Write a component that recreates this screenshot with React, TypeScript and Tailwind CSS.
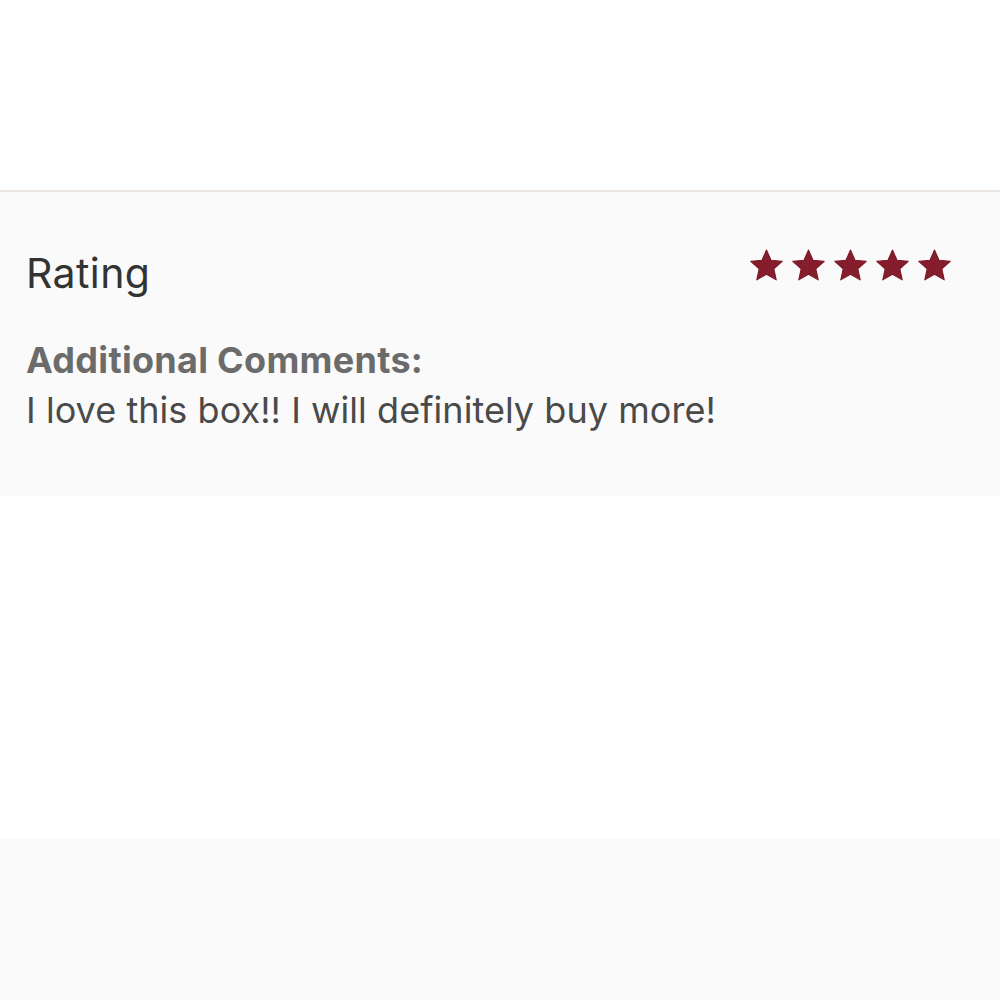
import React from "react";

const Star = () => (
  <svg width="33" height="32" viewBox="0 0 24 23" className="block">
    <path
      d="M12 0.6L15.29 8.07L23.41 8.89L17.33 14.33L19.05 22.31L12 18.2L4.95 22.31L6.67 14.33L0.59 8.89L8.71 8.07Z"
      fill="#861d2d"
      stroke="#7a1a29"
      strokeWidth="0.8"
      strokeLinejoin="round"
    />
  </svg>
);

export default function App() {
  return (
    <div className="w-[1000px] h-[1000px] bg-white flex flex-col" style={{ fontFamily: '"Inter", "Open Sans", sans-serif' }}>
      <div className="h-[190px] bg-white" />
      <div className="h-[306px] bg-[#fafafa] border-t-2 border-[#ebe6e1] px-[26px] pt-[57px]">
        <div className="flex items-start justify-between">
          <div className="text-[41px] leading-[41px] text-[#333333] pt-[4px] tracking-[0.4px]">Rating</div>
          <div className="flex gap-[9px] pr-[23px]">
            <Star />
            <Star />
            <Star />
            <Star />
            <Star />
          </div>
        </div>
        <div className="mt-[41px] text-[36px] leading-[50px] font-bold text-[#6b6b6b] tracking-[0.3px]">Additional Comments:</div>
        <div className="text-[36px] leading-[50px] text-[#4a4a4a] tracking-[0.05px]">I love this box!! I will definitely buy more!</div>
      </div>
      <div className="h-[343px] bg-white" />
      <div className="flex-1 bg-[#fafafa]" />
    </div>
  );
}
